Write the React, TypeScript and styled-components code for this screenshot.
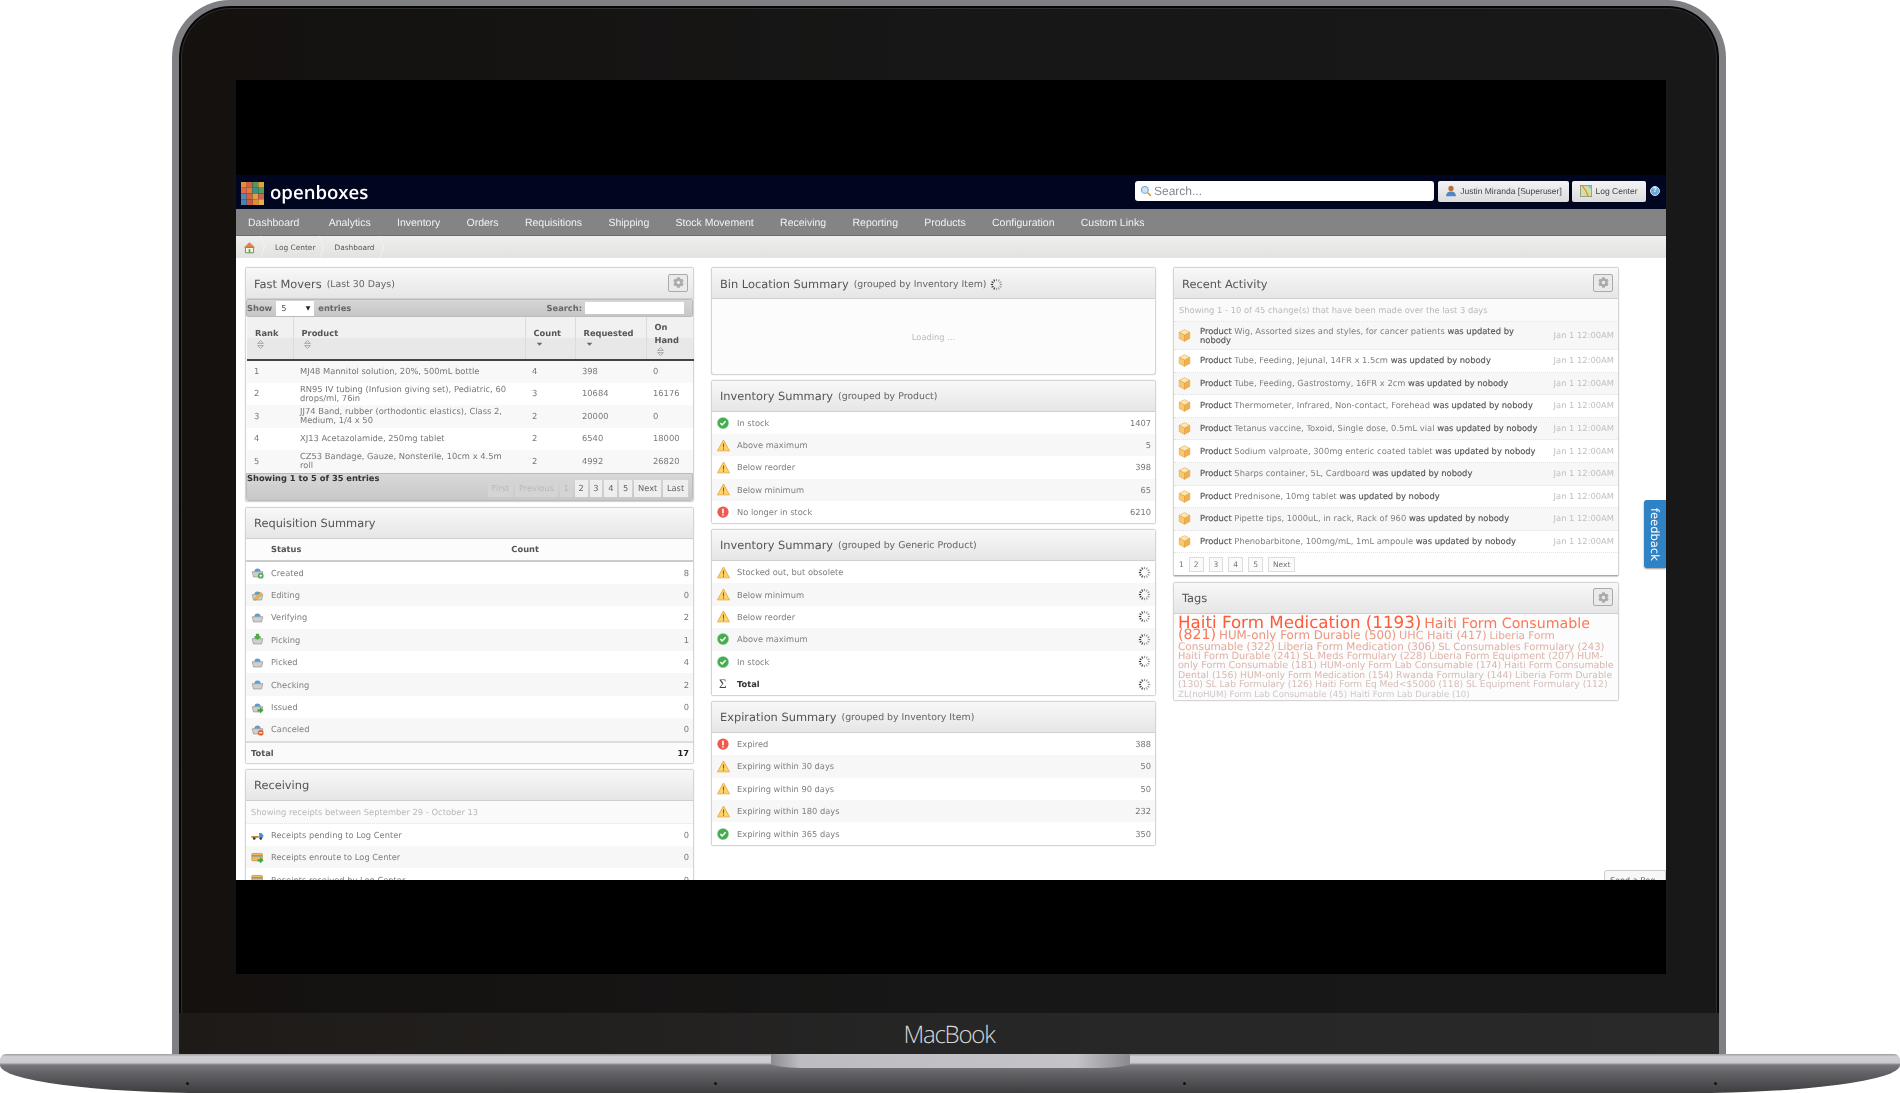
import React from "react";
import styled, { createGlobalStyle } from "styled-components";
import { FaCog } from "react-icons/fa";

const Global = createGlobalStyle`
  html, body { margin: 0; padding: 0; background: #fff; }
  body { font-family: "DejaVu Sans", sans-serif; text-rendering: geometricPrecision; }
  * { box-sizing: border-box; }
`;

const Page = styled.div`
  width: 1900px; height: 1093px; overflow: hidden; background: #fff;
  display: flex; flex-direction: column;
`;
const Lid = styled.div`
  width: 1554px; height: 1054px; margin-left: 172px; flex: none;
  display: flex; flex-direction: column; overflow: hidden;
  border: solid #7f7f84; border-width: 6px 7px 0 7px;
  border-radius: 58px 58px 0 0;
  background: linear-gradient(90deg, #14110f, #171717 50%, #181818);
  box-shadow: inset 0 0 0 2px #050505, inset 0 0 0 3px #2e2e2e;
`;
const Well = styled.div`
  flex: 1; padding: 74px 53px 39px 57px; min-height: 0;
`;
const Chin = styled.div`
  flex: none; height: 41px; display: flex; align-items: center; justify-content: center; padding-top: 2px;
  background: linear-gradient(90deg, #1e1a17, #262626 50%, #292929);
  color: #d8d8d8; font: 300 24px/1 "Open Sans", sans-serif; letter-spacing: -1.2px;
`;
const Base = styled.div`
  flex: none; height: 39px; position: relative; display: flex; flex-direction: column;
`;
const Strip = styled.div`
  height: 11px; border-radius: 6px 6px 0 0; flex: none;
  background: linear-gradient(180deg, #9d9da1, #cfcfd4 25%, #c9c9ce 80%, #77777b);
`;
const Bowl = styled.div`
  flex: 1; display: flex; align-items: flex-end; padding: 0 0 8px 186px;
  border-radius: 0 0 210px 210px / 0 0 28px 28px;
  background: linear-gradient(180deg, #77777b, #5f5f63 35%, #3d3d40);
`;
const Foot = styled.i<{ $gap: number }>`
  width: 3px; height: 3px; border-radius: 50%; background: #111; display: block; margin-left: ${(p) => p.$gap}px;
`;
const Notch = styled.div`
  position: absolute; left: 771px; top: 0; width: 359px; height: 14px;
  border-radius: 0 0 30px 30px / 0 0 5px 5px;
  background: linear-gradient(90deg, #8d8d91, #bdbdc1 8%, #c4c4c8 85%, #8a8a8e);
`;

const Screen = styled.div`
  width: 1430px; height: 894px; background: #000; display: flex; flex-direction: column;
  position: relative; overflow: hidden; filter: blur(.35px);
`;
const TopBlack = styled.div` height: 95px; flex: none; background: #000; `;
const Header = styled.div`
  height: 34px; flex: none; background: #000520; display: flex; align-items: center;
  padding: 0 0 2px 5px; position: relative;
`;
const BrandRow = styled.div`
  flex: 1; display: flex; align-items: center; padding-top: 4px;
`;
const Brand = styled.div`
  color: #fff; font: 600 18.6px/1 "Open Sans", sans-serif; margin-left: 6px;
`;
const Search = styled.div`
  width: 299px; height: 20px; background: #fff; border-radius: 3px; display: flex; align-items: center;
  padding-left: 5px; gap: 2px; color: #888; font: 12px "Liberation Sans", sans-serif;
`;
const HeadBtn = styled.div<{ $w: number }>`
  width: ${(p) => p.$w}px; height: 21px; margin-left: ${(p) => (p.$w > 100 ? 4 : 3)}px; background: linear-gradient(#f4f4f4, #dcdcdc); border-radius: 2px;
  display: flex; align-items: center; justify-content: center; gap: 3px; color: #444;
  font: 8.5px "Liberation Sans", sans-serif;
`;
const HelpDot = styled.div`
  width: 10px; height: 10px; border-radius: 50%; margin: 0 6px 0 4px; background: #6aa7dc;
  border: 1px solid #cfe2f3; color: #fff; font: bold 7px/8px "Liberation Sans", sans-serif; text-align: center;
`;
const Nav = styled.div`
  height: 27px; flex: none; background: #848484; border-bottom: 1px solid #6c6c6c; display: flex; align-items: center;
  padding: 1px 0 0 12px; gap: 26.3px; color: #f2f2f2; font: 10.5px "Liberation Sans", sans-serif;
  & > span:first-child { margin-right: 3px; }
`;
const Crumbs = styled.div`
  height: 22px; flex: none; background: linear-gradient(#efefef, #e2e2e0); display: flex; align-items: center;
  font-size: 7.4px; color: #555;
`;
const Crumb = styled.div<{ $first?: boolean }>`
  height: 100%; display: flex; align-items: center; position: relative;
  padding: ${(p) => (p.$first ? "0 9px 0 7px" : "0 9px 0 10px")};
  &::after {
    content: ""; position: absolute; right: -4px; top: 3px; width: 16px; height: 16px;
    border: solid #fafafa; border-width: 1px 1px 0 0; transform: scaleX(.35) rotate(45deg);
  }
`;
const Content = styled.div`
  height: 622px; flex: none; background: #fff; display: flex; gap: 17px; padding: 9px 0 0 9px;
  position: relative; overflow: hidden; align-items: flex-start;
`;
const BottomBlack = styled.div` flex: 1; background: #000; `;
const Column = styled.div<{ $w: number; $gap: number }>`
  width: ${(p) => p.$w}px; flex: none; display: flex; flex-direction: column; gap: ${(p) => p.$gap}px;
`;
const Panel = styled.div`
  border: 1px solid #d4d4d4; border-radius: 3px; background: #fcfcfc; box-shadow: 0 0 1px #bbb;
  flex: none;
`;
const TitleBar = styled.div`
  height: 31px; display: flex; align-items: center; padding: 1px 5px 0 8px;
  background: linear-gradient(#f8f8f8, #e6e6e6); border-bottom: 1px solid #cfcfcf;
  color: #555; font-size: 11.4px; white-space: pre;
`;
const TitleSub = styled.span`
  font-size: 9.4px; color: #666; margin-left: 5px; padding-top: 1px;
`;
const GearBtn = styled.div`
  margin-left: auto; width: 20px; height: 18px; border: 1px solid #aaa; background: #eaeaea; border-radius: 2px;
  display: flex; align-items: center; justify-content: center; color: #aaa; font-size: 11px; margin-bottom: 2px;
`;
const Row = styled.div<{ $alt?: boolean }>`
  height: 22.4px; display: flex; align-items: center; padding: 0 4px 0 5px;
  background: ${(p) => (p.$alt ? "#f7f7f7" : "#fff")};
  color: #808080; font-size: 8.3px;
`;
const IconSlot = styled.div`
  width: 20px; flex: none; display: flex; align-items: center;
`;
const RowValue = styled.div` margin-left: auto; color: #777; display: flex; `;
const Note = styled.div`
  height: 23px; display: flex; align-items: center; padding-left: 5px; font-size: 8.35px; color: #b9b9b9;
  background: #fafafa; border-bottom: 1px dotted #e4e4e4;
`;

/* Fast movers */
const Toolbar = styled.div`
  height: 18px; background: linear-gradient(#d6d6d6, #c6c6c6); border: 1px solid #bbb; border-radius: 2px;
  display: flex; align-items: center; font-size: 8.3px; font-weight: bold; color: #666; padding: 0 8px 0 0;
`;
const Select = styled.div`
  width: 38px; height: 15px; background: #fff; margin: 0 4px 0 4px; display: flex; justify-content: space-between;
  align-items: center; padding: 0 4px 0 5px; font-weight: normal; color: #555;
`;
const SelectArrow = styled.span` font-size: 6px; color: #222; `;
const SearchLabel = styled.span` margin-left: auto; margin-right: 3px; `;
const MiniInput = styled.div` width: 99px; height: 12px; background: #fff; `;
const Table = styled.table`
  width: 446px; margin-left: 1px; border-collapse: collapse; table-layout: fixed; font-size: 8.35px; color: #777;
`;
const Th = styled.th<{ $w: number }>`
  width: ${(p) => p.$w}px; height: 43px; padding: 0 0 0 8px; text-align: left; vertical-align: middle;
  background: linear-gradient(#f1f1f1 50%, #e8e8e8 50%); color: #555; font-size: 8.3px; line-height: 13px;
  border-right: 1px solid #dcdcdc; border-bottom: 2px solid #444; font-weight: bold;
`;
const SortMark = styled.span` display: block; height: 9px; line-height: 7px; padding-left: 2px; `;
const Tr = styled.tr<{ $alt?: boolean }>` background: ${(p) => (p.$alt ? "#fff" : "#f8f8f8")}; `;
const Td = styled.td`
  height: 22.5px; padding: 0 12px 0 7px; line-height: 9px; vertical-align: middle;
  &:not(:nth-child(2)) { padding-right: 0; }
`;
const TableFoot = styled.div`
  height: 28px; background: linear-gradient(#d8d8d8, #c8c8c8); border: 1px solid #bbb; border-radius: 0 0 3px 3px;
  display: flex; flex-direction: column; font-size: 8.3px; line-height: 9px; font-weight: bold; color: #333; padding: 0;
`;
const Pager = styled.div` display: flex; justify-content: flex-end; gap: 2px; padding-right: 4px; margin-top: -3px; `;
const PageBtn = styled.div<{ $off?: boolean }>`
  height: 17px; padding: 0 3.8px; display: flex; align-items: center; font-weight: normal;
  background: ${(p) => (p.$off ? "#d4d4d4" : "#eee")}; color: ${(p) => (p.$off ? "#b8b8b8" : "#666")};
`;

/* requisition */
const ReqHead = styled.div`
  height: 23px; display: flex; align-items: center; font-size: 8.3px; font-weight: bold; color: #555;
  border-bottom: 2px solid #ccc; padding-left: 25px;
`;
const CountHead = styled.span` margin-left: 210px; `;
const TotalRow = styled.div`
  height: 22px; display: flex; align-items: center; justify-content: space-between; padding: 0 4px 0 5px;
  font-size: 8.3px; font-weight: bold; color: #555; background: #fafafa; border-top: 2px solid #ddd;
`;
const TotalNum = styled.span` color: #222; `;
const Loading = styled.div`
  height: 75px; display: flex; align-items: center; justify-content: center; font-size: 8.3px; color: #bbb;
`;
const TitleSpin = styled.span` margin-left: 3px; display: inline-flex; padding-top: 2px; `;
const Sigma = styled.span` font: 13px "Liberation Serif", serif; color: #444; padding-left: 2px; `;
const BoldLabel = styled.span` font-weight: bold; color: #333; `;

/* activity */
const ActRow = styled.div<{ $tall?: boolean }>`
  height: ${(p) => (p.$tall ? "28px" : "22.6px")}; display: flex; align-items: center; padding: 0 4px 0 4px;
  font-size: 8.35px; line-height: 9px; color: #808080; background: #fff;
  border-bottom: 1px dotted #e2e2e2; &:nth-of-type(odd) { background: #f7f7f7; }
`;
const ActText = styled.div` flex: 1; padding: 0 11px 0 9px; `;
const Strong = styled.span` color: #555; -webkit-text-stroke: 0.15px #555; `;
const When = styled.div` color: #c0c0c0; white-space: nowrap; `;
const ActPager = styled.div`
  height: 23px; display: flex; align-items: center; gap: 5px; padding-left: 5px; color: #777; font-size: 7.5px;
  background: #fff; border-bottom: 1px solid #aaa;
`;
const PageBox = styled.span`
  border: 1px solid #ddd; padding: 2px 4px; background: #fafafa; line-height: 9px;
`;
const TagBox = styled.div`
  height: 86px; overflow: hidden; padding: 0 1px 0 4px; background: #fcfcfc; font-size: 9px; line-height: 9.4px;
`;
const TagItem = styled.span<{ $s: number; $c: string }>`
  font-size: ${(p) => p.$s}px; color: ${(p) => p.$c}; line-height: 0.82;
  &:nth-of-type(1) { line-height: .97; }
  &:nth-of-type(2) { line-height: .65; }
`;
const Feedback = styled.div`
  position: absolute; right: 0; top: 242px; width: 22px; height: 68px; background: #2f82c4;
  border-radius: 3px 0 0 3px; color: #fff; font: 11.5px "DejaVu Sans", sans-serif; writing-mode: vertical-rl;
  display: flex; align-items: center; justify-content: center; box-shadow: 0 1px 2px #999;
`;
const PeekBox = styled.div`
  position: absolute; right: 0; top: 612px; width: 62px; height: 20px; border: 1px solid #ccc; border-radius: 3px 0 0 0;
  background: #f7f7f7; color: #666; font: 8px "DejaVu Sans", sans-serif; padding: 5px 0 0 5px; white-space: nowrap; overflow: hidden;
`;

/* icons */
const Svg = ({ s = 12, children }: { s?: number; children: React.ReactNode }) => (
  <svg width={s} height={s} viewBox="0 0 16 16" aria-hidden="true">{children}</svg>
);
const Check = () => (
  <Svg><circle cx="8" cy="8" r="7.5" fill="#45ad4f" /><circle cx="8" cy="8" r="7.5" fill="none" stroke="#9ad19e" strokeWidth=".6" /><path d="M4.5 8.2l2.4 2.4 4.6-4.8" fill="none" stroke="#fff" strokeWidth="2" /></Svg>
);
const Warn = () => (
  <Svg s={13}><path d="M8 1.2L15.4 14.6H.6z" fill="#fbd46a" stroke="#e8a13a" strokeWidth="1" strokeLinejoin="round" /><path d="M8 5.5v5M8 11.6v1.6" stroke="#8a5a10" strokeWidth="1.3" /></Svg>
);
const Stop = () => (
  <Svg><circle cx="8" cy="8" r="7.5" fill="#ee5a4e" /><path d="M8 3.5v6M8 11v1.8" stroke="#fff" strokeWidth="2.2" /></Svg>
);
const Spinner = ({ s = 13 }: { s?: number }) => (
  <Svg s={s}>
    {Array.from({ length: 12 }).map((_, i) => (
      <line key={i} x1="8" y1="1" x2="8" y2="3.8" stroke={i > 6 ? "#333" : "#999"} strokeWidth="1.4" transform={`rotate(${i * 30} 8 8)`} />
    ))}
  </Svg>
);
const Cube = () => (
  <Svg s={13}>
    <path d="M8 .8l6.5 3.4L8 7.6 1.5 4.2z" fill="#fde8b0" stroke="#dfa040" strokeWidth=".7" />
    <path d="M1.5 4.2L8 7.6v7.6L1.5 11.700z" fill="#fac870" stroke="#dfa040" strokeWidth=".7" />
    <path d="M14.5 4.2L8 7.6v7.6l6.5-3.5z" fill="#f2b04c" stroke="#dfa040" strokeWidth=".7" />
  </Svg>
);
type Badge = "add" | "edit" | "down" | "go" | "stop" | "none";
const Cart = ({ badge }: { badge: Badge }) => (
  <Svg s={13}>
    <path d="M4 7c0-2.500 1.800-4 4-4s4 1.500 4 4z" fill="#5b9fd1" />
    <path d="M1.500 7h13l-1.500 6.500H3z" fill="#cfcfcf" stroke="#8d8d8d" strokeWidth=".8" />
    {badge === "add" && <><circle cx="12" cy="12" r="3.500" fill="#3fa64a" /><path d="M10 12h4M12 10v4" stroke="#fff" strokeWidth="1.100" /></>}
    {badge === "edit" && <path d="M5 11l7-7 2 2-7 7-3 1z" fill="#f3b93c" stroke="#b97d16" strokeWidth=".5" />}
    {badge === "down" && <path d="M6 1h4v3h2.500L8 8.500 3.500 4H6z" fill="#4fae3f" />}
    {badge === "go" && <path d="M8 10h3V7.500l4.500 4-4.500 4V13H8z" fill="#3fa64a" />}
    {badge === "stop" && <><circle cx="12" cy="12" r="3.500" fill="#e8602c" /><path d="M10 12h4" stroke="#fff" strokeWidth="1.300" /></>}
  </Svg>
);
const Truck = ({ kind }: { kind: "pending" | "route" | "done" }) =>
  kind === "pending" ? (
    <Svg s={13}>
      <path d="M.5 10h9v2h-9z" fill="#b9772b" /><path d="M10 6h3l2 3v3h-5z" fill="#4d8fd1" />
      <circle cx="4" cy="13" r="1.600" fill="#333" /><circle cx="12" cy="13" r="1.600" fill="#333" />
    </Svg>
  ) : (
    <Svg s={13}>
      <rect x="1" y="3" width="13" height="9" rx="1" fill="#f0b860" stroke="#b97d16" strokeWidth=".7" />
      <path d="M1 6h13" stroke="#6d8fb5" strokeWidth="1.500" />
      {kind === "route" && <path d="M8 10h3V7.500l4.500 4-4.500 4V13H8z" fill="#3fa64a" />}
    </Svg>
  );
const SortBoth = () => (
  <svg width="7" height="9" viewBox="0 0 6 8" aria-hidden="true"><path d="M3 .5L5.500 3H.5zM3 7.500L.5 5h5z" fill="none" stroke="#888" strokeWidth=".6" /></svg>
);
const SortDown = () => (
  <svg width="7" height="9" viewBox="0 0 6 8" aria-hidden="true"><path d="M.5 2.500h5L3 5z" fill="#666" /></svg>
);
const Logo = () => {
  const c = ["#e98a3c","#d65f4a","#4c9b5a","#e0a23a","#e0674a","#d87f3c","#3f8e8f","#4f9d5a","#5a86b5","#d9603f","#e0a040","#d0614e","#4c7fae","#c95a3f","#e58a3a","#e6b050"];
  return (
    <svg width="23" height="23" viewBox="0 0 4 4" aria-hidden="true">
      {c.map((f, i) => <rect key={i} x={i % 4} y={Math.floor(i / 4)} width="1" height="1" fill={f} />)}
    </svg>
  );
};
const Glass = () => (
  <Svg s={12}><circle cx="6.500" cy="6.500" r="4.500" fill="#cfe4f6" stroke="#6aa3d6" strokeWidth="1.400" /><path d="M10 10l4.500 4.500" stroke="#d99a4a" strokeWidth="2.200" /></Svg>
);
const UserIcon = () => (
  <Svg s={12}><circle cx="8" cy="4.500" r="3.500" fill="#b86f3c" /><path d="M1.500 15c0-5 3-6.500 6.500-6.500s6.500 1.500 6.500 6.500z" fill="#4d87c9" /></Svg>
);
const MapIcon = () => (
  <Svg s={12}><rect x=".5" y=".5" width="15" height="15" fill="#cfe39a" stroke="#888" /><path d="M3 1l5 7 3 7" stroke="#e8843a" strokeWidth="1.600" fill="none" /><path d="M9 1h6v5z" fill="#8cc0e6" /></Svg>
);
const HomeIcon = () => (
  <Svg s={13}>
    <path d="M8 1.500L15 8H1z" fill="#e0863a" />
    <path d="M3 8h10v6.500H3z" fill="#f4f1e6" stroke="#5e9c58" strokeWidth="1.200" />
    <path d="M7 10h2v4.500H7z" fill="#5e9c58" />
  </Svg>
);

const navItems = ["Dashboard","Analytics","Inventory","Orders","Requisitions","Shipping","Stock Movement","Receiving","Reporting","Products","Configuration","Custom Links"];
const movers = [
  ["1","MJ48 Mannitol solution, 20%, 500mL bottle","4","398","0"],
  ["2","RN95 IV tubing (Infusion giving set), Pediatric, 60 drops/ml, 76in","3","10684","16176"],
  ["3","JJ74 Band, rubber (orthodontic elastics), Class 2, Medium, 1/4 x 50","2","20000","0"],
  ["4","XJ13 Acetazolamide, 250mg tablet","2","6540","18000"],
  ["5","CZ53 Bandage, Gauze, Nonsterile, 10cm x 4.5m roll","2","4992","26820"],
];
const reqs: [string, Badge, string][] = [
  ["Created","add","8"],["Editing","edit","0"],["Verifying","none","2"],["Picking","down","1"],
  ["Picked","none","4"],["Checking","none","2"],["Issued","go","0"],["Canceled","stop","0"],
];
type St = "ok" | "warn" | "bad";
const Status = ({ k }: { k: St }) => (k === "ok" ? <Check /> : k === "warn" ? <Warn /> : <Stop />);
const inv: [St, string, string][] = [["ok","In stock","1407"],["warn","Above maximum","5"],["warn","Below reorder","398"],["warn","Below minimum","65"],["bad","No longer in stock","6210"]];
const gen: [St, string][] = [["warn","Stocked out, but obsolete"],["warn","Below minimum"],["warn","Below reorder"],["ok","Above maximum"],["ok","In stock"]];
const exp: [St, string, string][] = [["bad","Expired","388"],["warn","Expiring within 30 days","50"],["warn","Expiring within 90 days","50"],["warn","Expiring within 180 days","232"],["ok","Expiring within 365 days","350"]];
const acts = [
  "Wig, Assorted sizes and styles, for cancer patients","Tube, Feeding, Jejunal, 14FR x 1.5cm","Tube, Feeding, Gastrostomy, 16FR x 2cm",
  "Thermometer, Infrared, Non-contact, Forehead","Tetanus vaccine, Toxoid, Single dose, 0.5mL vial","Sodium valproate, 300mg enteric coated tablet",
  "Sharps container, 5L, Cardboard","Prednisone, 10mg tablet","Pipette tips, 1000uL, in rack, Rack of 960","Phenobarbitone, 100mg/mL, 1mL ampoule",
];
const tags: [string, number, string][] = [
  ["Haiti Form Medication (1193)",16.7,"#ff5a36"],["Haiti Form Consumable (821)",14.2,"#f8795a"],["HUM-only Form Durable (500)",11.85,"#eb9580"],
  ["UHC Haiti (417)",11.2,"#e8a090"],["Liberia Form Consumable (322)",10.5,"#e4a898"],["Liberia Form Medication (306)",10.5,"#e2aa9c"],
  ["SL Consumables Formulary (243)",10,"#dfb0a4"],["Haiti Form Durable (241)",9.8,"#dfb0a4"],["SL Meds Formulary (228)",9.9,"#dfb2a6"],
  ["Liberia Form Equipment (207)",9.7,"#dcb4aa"],["HUM-only Form Consumable (181)",9.6,"#dab6ae"],["HUM-only Form Lab Consumable (174)",9.4,"#dab6ae"],
  ["Haiti Form Consumable Dental (156)",9.4,"#d8b8b0"],["HUM-only Form Medication (154)",9.3,"#d8b8b0"],["Rwanda Formulary (144)",9.4,"#d6bab4"],
  ["Liberia Form Durable (130)",9.25,"#d5bcb6"],["SL Lab Formulary (126)",9.15,"#d5bcb6"],["Haiti Form Eq Med<$5000 (118)",9.15,"#d4beb8"],
  ["SL Equipment Formulary (112)",9.25,"#d4beb8"],["ZL(noHUM) Form Lab Consumable (45)",8.7,"#cfc6c4"],["Haiti Form Lab Durable (10)",8.6,"#cfc8c6"],
];

const Title = ({ t, sub, gear, spin }: { t: string; sub?: string; gear?: boolean; spin?: boolean }) => (
  <TitleBar>
    {t}{sub && <TitleSub>{sub}</TitleSub>}{spin && <TitleSpin><Spinner /></TitleSpin>}
    {gear && <GearBtn><FaCog /></GearBtn>}
  </TitleBar>
);

export default function App() {
  return (
    <Page>
      <Global />
      <Lid>
        <Well>
          <Screen>
            <TopBlack />
            <Header>
              <BrandRow><Logo /><Brand>openboxes</Brand></BrandRow>
              <Search><Glass />Search...</Search>
              <HeadBtn $w={131}><UserIcon />Justin Miranda [Superuser]</HeadBtn>
              <HeadBtn $w={74}><MapIcon />Log Center</HeadBtn>
              <HelpDot>?</HelpDot>
            </Header>
            <Nav>{navItems.map((n) => <span key={n}>{n}</span>)}</Nav>
            <Crumbs>
              <Crumb $first><HomeIcon /></Crumb>
              <Crumb>Log Center</Crumb>
              <Crumb>Dashboard</Crumb>
            </Crumbs>
            <Content>
              <Column $w={449} $gap={5}>
                <Panel>
                  <Title t="Fast Movers" sub="(Last 30 Days)" gear />
                  <Toolbar>Show<Select>5<SelectArrow>▼</SelectArrow></Select>entries<SearchLabel>Search:</SearchLabel><MiniInput /></Toolbar>
                  <Table>
                    <thead>
                      <tr>
                        <Th $w={46}>Rank<SortMark><SortBoth /></SortMark></Th>
                        <Th $w={232}>Product<SortMark><SortBoth /></SortMark></Th>
                        <Th $w={50}>Count<SortMark><SortDown /></SortMark></Th>
                        <Th $w={71}>Requested<SortMark><SortDown /></SortMark></Th>
                        <Th $w={47}>On Hand<SortMark><SortBoth /></SortMark></Th>
                      </tr>
                    </thead>
                    <tbody>
                      {movers.map((r, i) => (
                        <Tr key={r[0]} $alt={i % 2 === 1}>{r.map((c, j) => <Td key={j}>{c}</Td>)}</Tr>
                      ))}
                    </tbody>
                  </Table>
                  <TableFoot>
                    Showing 1 to 5 of 35 entries
                    <Pager>
                      <PageBtn $off>First</PageBtn><PageBtn $off>Previous</PageBtn><PageBtn $off>1</PageBtn>
                      {["2","3","4","5","Next","Last"].map((p) => <PageBtn key={p}>{p}</PageBtn>)}
                    </Pager>
                  </TableFoot>
                </Panel>
                <Panel>
                  <Title t="Requisition Summary" />
                  <ReqHead>Status<CountHead>Count</CountHead></ReqHead>
                  {reqs.map(([l, b, v], i) => (
                    <Row key={l} $alt={i % 2 === 1}><IconSlot><Cart badge={b} /></IconSlot>{l}<RowValue>{v}</RowValue></Row>
                  ))}
                  <TotalRow>Total<TotalNum>17</TotalNum></TotalRow>
                </Panel>
                <Panel>
                  <Title t="Receiving" />
                  <Note>Showing receipts between September 29 - October 13</Note>
                  <Row><IconSlot><Truck kind="pending" /></IconSlot>Receipts pending to Log Center<RowValue>0</RowValue></Row>
                  <Row $alt><IconSlot><Truck kind="route" /></IconSlot>Receipts enroute to Log Center<RowValue>0</RowValue></Row>
                  <Row><IconSlot><Truck kind="done" /></IconSlot>Receipts received by Log Center<RowValue>0</RowValue></Row>
                </Panel>
              </Column>
              <Column $w={445} $gap={4.5}>
                <Panel>
                  <Title t="Bin Location Summary" sub="(grouped by Inventory Item)" spin />
                  <Loading>Loading ...</Loading>
                </Panel>
                <Panel>
                  <Title t="Inventory Summary" sub="(grouped by Product)" />
                  {inv.map(([k, l, v], i) => (
                    <Row key={l} $alt={i % 2 === 1}><IconSlot><Status k={k} /></IconSlot>{l}<RowValue>{v}</RowValue></Row>
                  ))}
                </Panel>
                <Panel>
                  <Title t="Inventory Summary" sub="(grouped by Generic Product)" />
                  {gen.map(([k, l], i) => (
                    <Row key={l} $alt={i % 2 === 1}><IconSlot><Status k={k} /></IconSlot>{l}<RowValue><Spinner /></RowValue></Row>
                  ))}
                  <Row><IconSlot><Sigma>Σ</Sigma></IconSlot><BoldLabel>Total</BoldLabel><RowValue><Spinner /></RowValue></Row>
                </Panel>
                <Panel>
                  <Title t="Expiration Summary" sub="(grouped by Inventory Item)" />
                  {exp.map(([k, l, v], i) => (
                    <Row key={l} $alt={i % 2 === 1}><IconSlot><Status k={k} /></IconSlot>{l}<RowValue>{v}</RowValue></Row>
                  ))}
                </Panel>
              </Column>
              <Column $w={446} $gap={4.5}>
                <Panel>
                  <Title t="Recent Activity" gear />
                  <Note>Showing 1 - 10 of 45 change(s) that have been made over the last 3 days</Note>
                  {acts.map((a, i) => (
                    <ActRow key={a} $tall={i === 0}>
                      <Cube />
                      <ActText><Strong>Product</Strong> {a} <Strong>was updated by nobody</Strong></ActText>
                      <When>Jan 1 12:00AM</When>
                    </ActRow>
                  ))}
                  <ActPager>1{["2","3","4","5","Next"].map((p) => <PageBox key={p}>{p}</PageBox>)}</ActPager>
                </Panel>
                <Panel>
                  <Title t="Tags" gear />
                  <TagBox>
                    {tags.map(([t, s, c]) => <React.Fragment key={t}><TagItem $s={s} $c={c}>{t}</TagItem>{" "}</React.Fragment>)}
                  </TagBox>
                </Panel>
              </Column>
              <Feedback>feedback</Feedback>
              <PeekBox>Send a Req</PeekBox>
            </Content>
            <BottomBlack />
          </Screen>
        </Well>
        <Chin>MacBook</Chin>
      </Lid>
      <Base>
        <Strip />
        <Bowl><Foot $gap={0} /><Foot $gap={525} /><Foot $gap={466} /><Foot $gap={528} /></Bowl>
        <Notch />
      </Base>
    </Page>
  );
}
